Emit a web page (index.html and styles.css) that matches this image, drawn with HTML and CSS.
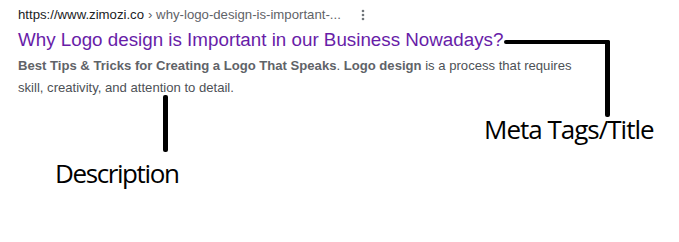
FILE: index.html
```html
<!DOCTYPE html>
<html lang="en">
<head>
    <meta charset="UTF-8">
    <meta name="viewport" content="width=device-width, initial-scale=1.0">
    <title>Meta Tags</title>
    <link rel="stylesheet" href="styles.css">
</head>
<body>
    <div class="canvas">
        <div class="result">
            <div class="url-row">
                <span class="site">https://www.zimozi.co</span>
                <span class="crumb">› why-logo-design-is-important-...</span>
                <span class="more">
                    <svg width="4" height="12" viewBox="0 0 4 12">
                        <circle cx="2" cy="2" r="1.3"/>
                        <circle cx="2" cy="6" r="1.3"/>
                        <circle cx="2" cy="10" r="1.3"/>
                    </svg>
                </span>
            </div>
            <a class="title" href="#">Why Logo design is Important in our Business Nowadays?</a>
            <p class="desc"><b>Best Tips &amp; Tricks for Creating a Logo That Speaks</b>. <b>Logo design</b> is a process that requires skill, creativity, and attention to detail.</p>
        </div>

        <!-- hand drawn annotations -->
        <div class="line title-h"></div>
        <div class="line title-v"></div>
        <div class="label title-label">Meta Tags/Title</div>

        <div class="line desc-v"></div>
        <div class="label desc-label">Description</div>
    </div>
</body>
</html>
```

FILE: styles.css
```css
body {
    margin: 0;
    background: #fff;
    font-family: 'Liberation Sans', Arial, sans-serif;
}

.canvas {
    position: relative;
    width: 679px;
    height: 242px;
    overflow: hidden;
}

.result {
    padding: 5px 0 0 18px;
    width: 570px;
}

.url-row {
    display: flex;
    align-items: center;
    font-size: 13.2px;
    line-height: 20px;
    white-space: nowrap;
}

.site {
    color: #202124;
}

.crumb {
    color: #5f6368;
    margin-left: 4px;
}

.more {
    display: flex;
    margin-left: 20px;
    fill: #70757a;
}

.title {
    display: block;
    margin-top: 2px;
    color: #681da8;
    font-size: 18.8px;
    line-height: 26px;
    text-decoration: none;
    white-space: nowrap;
}

.desc {
    margin: 2px 0 0;
    color: #4d5156;
    font-size: 13.1px;
    line-height: 21.5px;
}

.desc b {
    color: #5f6368;
}

.line {
    position: absolute;
    background: #000;
    border-radius: 2px;
}

.title-h {
    left: 504px;
    top: 40px;
    width: 106px;
    height: 4px;
}

.title-v {
    left: 605px;
    top: 40px;
    width: 5px;
    height: 77px;
}

.desc-v {
    left: 163px;
    top: 95px;
    width: 5px;
    height: 57px;
}

.label {
    position: absolute;
    font-family: 'Open Sans', sans-serif;
    font-size: 26px;
    letter-spacing: -1px;
    color: #000;
    line-height: 1;
    white-space: nowrap;
}

.title-label {
    left: 484px;
    top: 116px;
}

.desc-label {
    left: 55px;
    top: 160px;
    letter-spacing: -1.4px;
}
```
